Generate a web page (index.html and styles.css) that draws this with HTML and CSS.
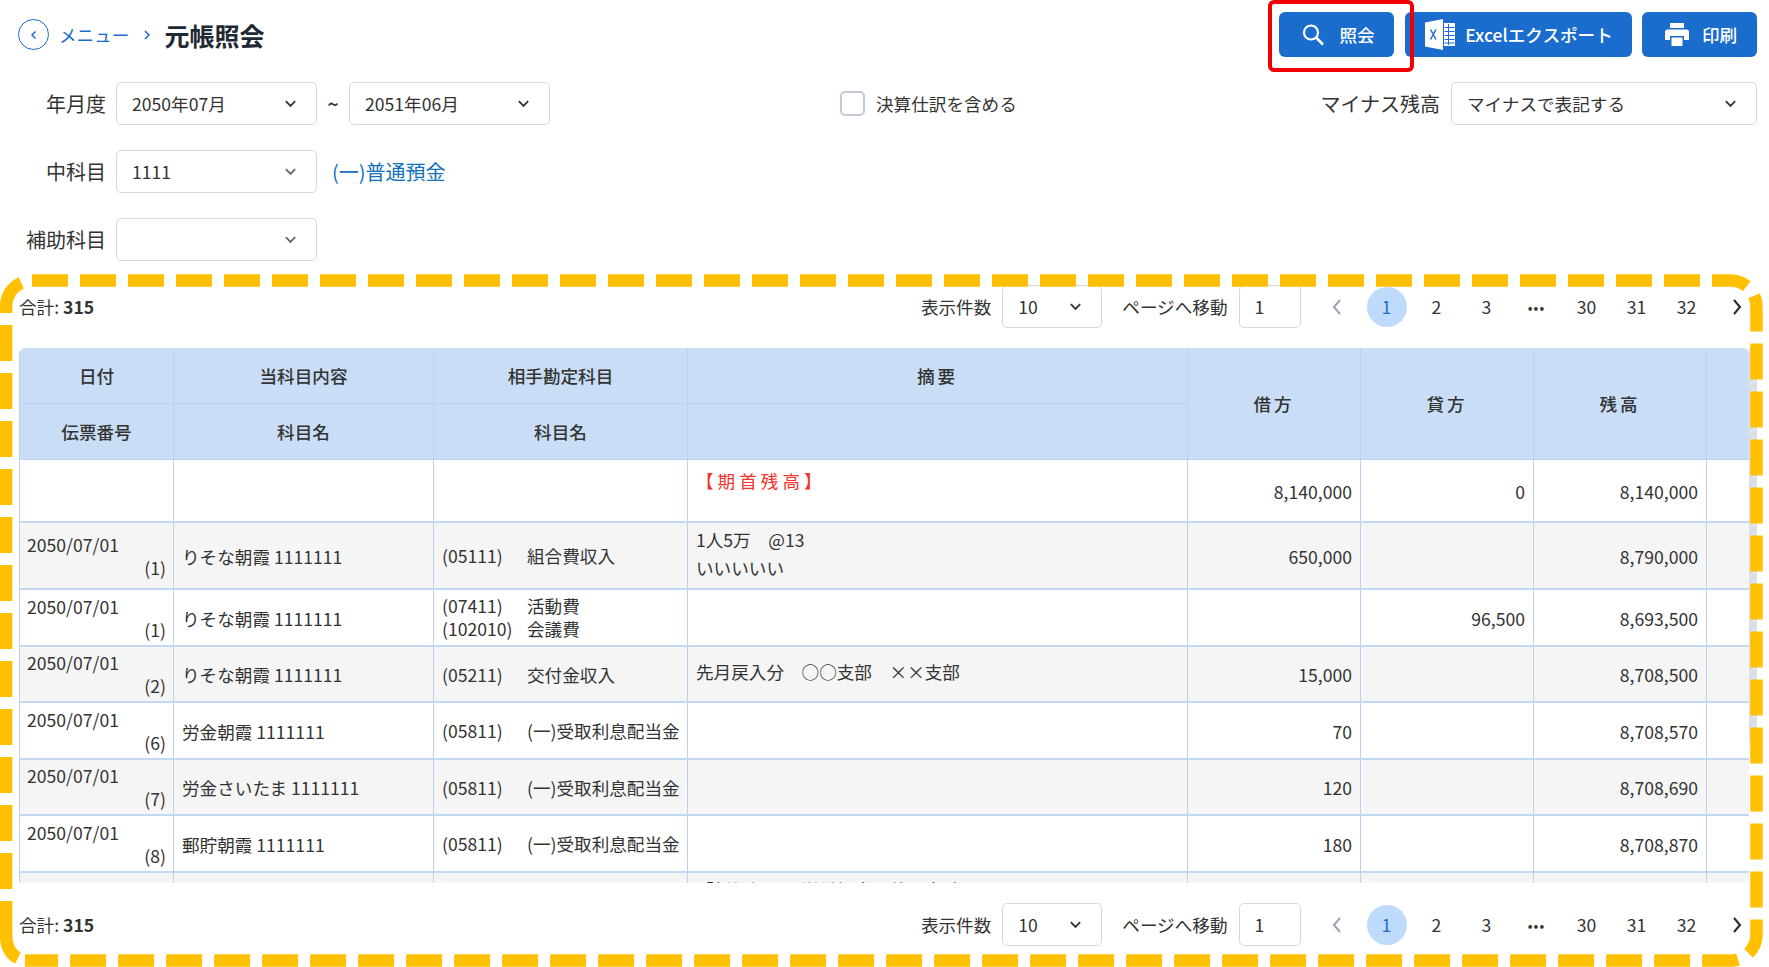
FILE: index.html
```html
<!DOCTYPE html>
<html lang="ja">
<head>
    <meta charset="UTF-8">
    <meta name="viewport" content="width=device-width, initial-scale=1.0">
    <title>元帳照会</title>
    <link rel="stylesheet" href="styles.css">
</head>
<body>
    <div class="page">
        <header class="topbar">
            <nav class="crumbs">
                <span class="back-btn">
                    <svg width="12" height="12" viewBox="0 0 12 12"><path d="M7.5 2.5 4 6l3.500 3.500" class="stroke-blue"/></svg>
                </span>
                <a class="crumb-link">メニュー</a>
                <svg class="crumb-sep" width="10" height="12" viewBox="0 0 10 12"><path d="M3 2l4 4-4 4" class="stroke-blue"/></svg>
                <h1>元帳照会</h1>
            </nav>
            <div class="actions">
                <button class="btn btn-search">
                    <svg width="26" height="26" viewBox="0 0 26 26"><circle cx="11" cy="10.5" r="7" fill="none" stroke="#fff" stroke-width="2.2"/><path d="M16 15.5l7 7" stroke="#fff" stroke-width="2.6" fill="none"/></svg>
                    <span>照会</span>
                </button>
                <button class="btn btn-excel">
                    <svg width="32" height="33" viewBox="0 0 32 33">
                        <path d="M1 4.5 19 1v31L1 28.5z" fill="#fff"/>
                        <path d="M20 5h11v23H20z" fill="#fff"/>
                        <path d="M20.5 9.5h10M20.5 13.5h10M20.5 17.5h10M20.5 21.5h10M20.500 25h10M24.500 6v21" stroke="#1a6dcc" fill="none"/>
                        <path d="M6.5 11.5l5.500 10M12 11.5l-5.500 10" stroke="#1a6dcc" stroke-width="1.5" fill="none"/>
                    </svg>
                    <span>Excelエクスポート</span>
                </button>
                <button class="btn btn-print">
                    <svg width="26" height="25" viewBox="0 0 26 25">
                        <path d="M6 1h14v5H6z" fill="#fff"/>
                        <path d="M3.5 7.5h19A2.5 2.5 0 0 1 25 10v8h-5v-4H6v4H1v-8a2.5 2.5 0 0 1 2.5-2.5z" fill="#fff"/>
                        <path d="M7.5 15.5h11V24h-11z" fill="#fff"/>
                    </svg>
                    <span>印刷</span>
                </button>
            </div>
        </header>

        <section class="filters">
            <div class="filter-row">
                <div class="filter-left">
                    <label class="field-label">年月度</label>
                    <div class="select"><span>2050年07月</span><svg class="chev" viewBox="0 0 14 10"><path d="M2 2l5 5 5-5"/></svg></div>
                    <span class="tilde">~</span>
                    <div class="select"><span>2051年06月</span><svg class="chev" viewBox="0 0 14 10"><path d="M2 2l5 5 5-5"/></svg></div>
                </div>
                <label class="check-wrap"><span class="checkbox"></span>決算仕訳を含める</label>
                <div class="filter-right">
                    <label class="field-label-auto">マイナス残高</label>
                    <div class="select select-wide"><span>マイナスで表記する</span><svg class="chev" viewBox="0 0 14 10"><path d="M2 2l5 5 5-5"/></svg></div>
                </div>
            </div>
            <div class="filter-row">
                <div class="filter-left">
                    <label class="field-label">中科目</label>
                    <div class="select"><span>1111</span><svg class="chev chev-soft" viewBox="0 0 14 10"><path d="M2 2l5 5 5-5"/></svg></div>
                    <a class="account-link">(一)普通預金</a>
                </div>
            </div>
            <div class="filter-row">
                <div class="filter-left">
                    <label class="field-label">補助科目</label>
                    <div class="select"><span></span><svg class="chev chev-soft" viewBox="0 0 14 10"><path d="M2 2l5 5 5-5"/></svg></div>
                </div>
            </div>
        </section>

        <div class="toolbar">
            <div class="total">合計: <b>315</b></div>
            <div class="toolbar-right">
                <span>表示件数</span>
                <div class="select select-size"><span>10</span><svg class="chev" viewBox="0 0 14 10"><path d="M2 2l5 5 5-5"/></svg></div>
                <span class="goto-label">ページへ移動</span>
                <div class="goto-input">1</div>
                <ul class="pager">
                    <li class="muted"><svg width="10" height="18" viewBox="0 0 10 18"><path d="M8 2 2 9l6 7"/></svg></li>
                    <li><span class="page-current">1</span></li>
                    <li>2</li>
                    <li>3</li>
                    <li class="dots">•••</li>
                    <li>30</li>
                    <li>31</li>
                    <li>32</li>
                    <li><svg width="10" height="18" viewBox="0 0 10 18"><path d="M2 2l6 7-6 7"/></svg></li>
                </ul>
            </div>
        </div>

        <div class="ledger-wrap">
            <div class="ledger-scroll">
                <table class="ledger">
                    <colgroup>
                        <col class="c-date"><col class="c-acct"><col class="c-other"><col class="c-memo">
                        <col class="c-num"><col class="c-num"><col class="c-num"><col class="c-end">
                    </colgroup>
                    <thead>
                        <tr>
                            <th>日付</th><th>当科目内容</th><th>相手勘定科目</th><th class="spaced">摘要</th>
                            <th rowspan="2" class="spaced">借方</th><th rowspan="2" class="spaced">貸方</th><th rowspan="2" class="spaced">残高</th><th rowspan="2"></th>
                        </tr>
                        <tr><th>伝票番号</th><th>科目名</th><th>科目名</th><th></th></tr>
                    </thead>
                    <tbody>
                        <tr class="row-open">
                            <td></td><td></td><td></td><td class="memo-top"><span class="opening">【期首残高】</span></td>
                            <td class="num">8,140,000</td><td class="num">0</td><td class="num">8,140,000</td><td></td>
                        </tr>
                        <tr class="row-tall alt">
                            <td class="date"><div>2050/07/01</div><div class="slip">(1)</div></td>
                            <td class="name">りそな朝霞 1111111</td>
                            <td class="other"><div class="pair"><span>(05111)</span><span>組合費収入</span></div></td>
                            <td class="memo"><div class="memo-line">1人5万　@13</div><div class="memo-line">いいいいい</div></td>
                            <td class="num">650,000</td><td class="num"></td><td class="num">8,790,000</td><td></td>
                        </tr>
                        <tr>
                            <td class="date"><div>2050/07/01</div><div class="slip">(1)</div></td>
                            <td class="name">りそな朝霞 1111111</td>
                            <td class="other tight"><div class="pair"><span>(07411)</span><span>活動費</span></div><div class="pair"><span>(102010)</span><span>会議費</span></div></td>
                            <td class="memo"></td>
                            <td class="num"></td><td class="num">96,500</td><td class="num">8,693,500</td><td></td>
                        </tr>
                        <tr class="alt">
                            <td class="date"><div>2050/07/01</div><div class="slip">(2)</div></td>
                            <td class="name">りそな朝霞 1111111</td>
                            <td class="other"><div class="pair"><span>(05211)</span><span>交付金収入</span></div></td>
                            <td class="memo">先月戻入分　○○支部　××支部</td>
                            <td class="num">15,000</td><td class="num"></td><td class="num">8,708,500</td><td></td>
                        </tr>
                        <tr>
                            <td class="date"><div>2050/07/01</div><div class="slip">(6)</div></td>
                            <td class="name">労金朝霞 1111111</td>
                            <td class="other"><div class="pair"><span>(05811)</span><span>(一)受取利息配当金</span></div></td>
                            <td class="memo"></td>
                            <td class="num">70</td><td class="num"></td><td class="num">8,708,570</td><td></td>
                        </tr>
                        <tr class="alt">
                            <td class="date"><div>2050/07/01</div><div class="slip">(7)</div></td>
                            <td class="name">労金さいたま 1111111</td>
                            <td class="other"><div class="pair"><span>(05811)</span><span>(一)受取利息配当金</span></div></td>
                            <td class="memo"></td>
                            <td class="num">120</td><td class="num"></td><td class="num">8,708,690</td><td></td>
                        </tr>
                        <tr>
                            <td class="date"><div>2050/07/01</div><div class="slip">(8)</div></td>
                            <td class="name">郵貯朝霞 1111111</td>
                            <td class="other"><div class="pair"><span>(05811)</span><span>(一)受取利息配当金</span></div></td>
                            <td class="memo"></td>
                            <td class="num">180</td><td class="num"></td><td class="num">8,708,870</td><td></td>
                        </tr>
                        <tr class="alt">
                            <td></td><td></td><td></td>
                            <td class="memo-top memo-cut">「新規加入　労働組合　他　合計」</td>
                            <td></td><td></td><td></td><td></td>
                        </tr>
                    </tbody>
                </table>
            </div>
            <div class="scroll-track"><div class="scroll-thumb"></div></div>
        </div>

        <div class="toolbar toolbar-bottom">
            <div class="total">合計: <b>315</b></div>
            <div class="toolbar-right">
                <span>表示件数</span>
                <div class="select select-size"><span>10</span><svg class="chev" viewBox="0 0 14 10"><path d="M2 2l5 5 5-5"/></svg></div>
                <span class="goto-label">ページへ移動</span>
                <div class="goto-input">1</div>
                <ul class="pager">
                    <li class="muted"><svg width="10" height="18" viewBox="0 0 10 18"><path d="M8 2 2 9l6 7"/></svg></li>
                    <li><span class="page-current">1</span></li>
                    <li>2</li>
                    <li>3</li>
                    <li class="dots">•••</li>
                    <li>30</li>
                    <li>31</li>
                    <li>32</li>
                    <li><svg width="10" height="18" viewBox="0 0 10 18"><path d="M2 2l6 7-6 7"/></svg></li>
                </ul>
            </div>
        </div>

        <!-- annotation layer: red box on the search button, dashed frame round the list -->
        <div class="red-box"></div>
        <svg class="dash-frame" width="1769" height="967" viewBox="0 0 1769 967">
            <path d="M32 280.5H1730.5A26 26 0 0 1 1756.5 306.5V934.5A26 26 0 0 1 1730.5 960.5H25"/>
            <path d="M6 889V306.5A26 26 0 0 1 32 280.5"/>
            <path class="solid" d="M18 958Q6 952 6 934.5V901"/>
        </svg>
    </div>
</body>
</html>
```

FILE: styles.css
```css
* {
    box-sizing: border-box;
}
html, body {
    margin: 0;
    height: 100%;
}
body {
    font-family: "Noto Sans CJK JP", "Noto Sans", sans-serif;
    font-size: 17.6px;
    color: #333;
    background: #fff;
    overflow: hidden;
}
.page {
    position: relative;
    width: 1769px;
    height: 967px;
    overflow: hidden;
    padding-top: 12px;
}

/* header */
.topbar {
    display: flex;
    justify-content: space-between;
    align-items: center;
    height: 45px;
    padding: 0 12px 0 18px;
}
.crumbs {
    display: flex;
    align-items: center;
}
.back-btn {
    width: 31px;
    height: 31px;
    border: 1.5px solid #1a6dcc;
    border-radius: 50%;
    display: flex;
    align-items: center;
    justify-content: center;
}
.stroke-blue {
    fill: none;
    stroke: #1a6dcc;
    stroke-width: 1.5;
}
.crumb-link {
    color: #1a6dcc;
    margin-left: 10px;
}
.crumb-sep {
    margin-left: 13px;
}
.crumbs h1 {
    margin: 0 0 0 12px;
    font-size: 25px;
    font-weight: 700;
    color: #1f2933;
}
.actions {
    display: flex;
    gap: 10px;
}
.btn {
    height: 45px;
    display: flex;
    align-items: center;
    justify-content: center;
    border: none;
    border-radius: 6px;
    background: #1a6dcc;
    color: #fff;
    font: 500 17.6px "Noto Sans CJK JP", sans-serif;
}
.btn-search {
    width: 115px;
    gap: 13px;
    padding: 0 0 0 2px;
    margin-right: 1px;
}
.btn-excel {
    width: 227px;
    gap: 9px;
    padding: 0;
}
.btn-print {
    width: 115px;
    gap: 12px;
    padding: 0 0 0 2px;
}

/* filters */
.filters {
    display: flex;
    flex-direction: column;
    gap: 25px;
    margin-top: 25px;
    padding-right: 12px;
}
.filter-row {
    display: flex;
    align-items: center;
    height: 43px;
}
.filter-left {
    display: flex;
    align-items: center;
    width: 840px;
}
.field-label {
    width: 106px;
    margin-right: 10px;
    text-align: right;
    font-size: 20px;
}
.field-label-auto {
    margin-right: 11px;
    font-size: 20px;
}
.select {
    width: 201px;
    height: 43px;
    display: flex;
    align-items: center;
    justify-content: space-between;
    padding: 0 19px 0 15px;
    border: 1px solid #d3d9e3;
    border-radius: 5px;
    background: #fff;
}
.select-wide {
    width: 306px;
}
.select-size {
    width: 100px;
}
.chev {
    width: 13px;
    height: 10px;
    flex: none;
}
.chev path {
    fill: none;
    stroke: #333;
    stroke-width: 2;
}
.chev-soft path {
    stroke: #666;
}
.tilde {
    width: 32px;
    text-align: center;
    font-size: 20px;
    font-weight: 500;
}
.account-link {
    margin-left: 15px;
    color: #1272bb;
    font-size: 20px;
}
.check-wrap {
    display: flex;
    align-items: center;
    gap: 11px;
}
.checkbox {
    width: 25px;
    height: 25px;
    border: 2px solid #c3cad6;
    border-radius: 5px;
}
.filter-right {
    display: flex;
    align-items: center;
    margin-left: auto;
}

/* list toolbar */
.toolbar {
    display: flex;
    justify-content: space-between;
    align-items: center;
    height: 43px;
    margin: 24px 7.5px 0 19px;
}
.toolbar-bottom {
    margin-top: 20px;
}
.total b {
    font-weight: 700;
}
.toolbar-right {
    display: flex;
    align-items: center;
}
.toolbar-right > span {
    margin-right: 11px;
}
.goto-label {
    margin-left: 20px;
}
.goto-input {
    width: 62px;
    height: 43px;
    display: flex;
    align-items: center;
    padding-left: 15px;
    border: 1px solid #d3d9e3;
    border-radius: 5px;
}
.pager {
    list-style: none;
    display: flex;
    margin: 0 0 0 11px;
    padding: 0;
}
.pager li {
    width: 50px;
    display: flex;
    align-items: center;
    justify-content: center;
}
.pager svg path {
    fill: none;
    stroke: #1f2933;
    stroke-width: 2;
}
.pager .muted svg path {
    stroke: #9aa5b4;
}
.page-current {
    width: 40px;
    height: 40px;
    border-radius: 50%;
    background: #bfdbfb;
    color: #1a6dcc;
    display: flex;
    align-items: center;
    justify-content: center;
}
.pager .dots {
    font-size: 14px;
    letter-spacing: 1px;
}

/* ledger table */
.ledger-wrap {
    display: flex;
    height: 535px;
    margin: 20px 12px 0 19px;
    overflow: hidden;
}
.ledger-scroll {
    width: 1730px;
    flex: none;
    overflow: hidden;
    border-radius: 6px 6px 0 0;
}
.scroll-track {
    flex: 1;
}
.scroll-thumb {
    height: 395px;
    background: #dce0e8;
}
.ledger {
    width: 1730px;
    table-layout: fixed;
    border-collapse: collapse;
    line-height: 1.5;
}
.c-date { width: 154px; }
.c-acct { width: 260px; }
.c-other { width: 254px; }
.c-memo { width: 500px; }
.c-num { width: 173px; }
.c-end { width: 43px; }
.ledger th {
    height: 55.5px;
    padding: 2px 0 0;
    background: #c9def6;
    border: 1px solid #b8d2f0;
    border-top: none;
    font-weight: 500;
    text-align: center;
    color: #333;
}
.ledger th.spaced {
    letter-spacing: 3px;
}
.ledger td {
    height: 56.5px;
    padding: 0 8px;
    border: 1px solid #b8d2f0;
    border-top: 2px solid #c3d9f3;
    border-bottom: 2px solid #c3d9f3;
    vertical-align: middle;
    white-space: nowrap;
    overflow: hidden;
}
.ledger .alt td {
    background: #f5f5f5;
}
.ledger .row-open td {
    height: 63px;
    border-top: none;
}
.ledger .row-tall td {
    height: 67px;
}
.ledger td.num {
    text-align: right;
    padding-top: 3px;
}
.ledger td.memo-top {
    vertical-align: top;
    padding-top: 8px;
}
.ledger td.memo-cut {
    padding-top: 4px;
}
.opening {
    color: #f2342c;
    letter-spacing: 4px;
}
.ledger td.date {
    padding: 1px 7px 0;
    line-height: 23px;
}
.slip {
    text-align: right;
}
.ledger td.name {
    padding-top: 3px;
}
.pair {
    display: flex;
}
.pair span:first-child {
    width: 85px;
    flex: none;
}
.ledger td.other {
    padding-top: 2px;
}
.ledger td.tight {
    line-height: 23px;
    padding-top: 0;
}
.ledger td.memo {
    padding-bottom: 3px;
}
.memo-line {
    line-height: 28px;
}

/* annotations */
.red-box {
    position: absolute;
    left: 1268px;
    top: 0;
    width: 146px;
    height: 72px;
    border: 4.5px solid #f00000;
    border-radius: 6px;
}
.dash-frame {
    position: absolute;
    left: 0;
    top: 0;
    pointer-events: none;
}
.dash-frame path {
    fill: none;
    stroke: #ffc000;
    stroke-width: 12.5;
    stroke-dasharray: 36 12;
}
.dash-frame .solid {
    stroke-dasharray: none;
}
```
